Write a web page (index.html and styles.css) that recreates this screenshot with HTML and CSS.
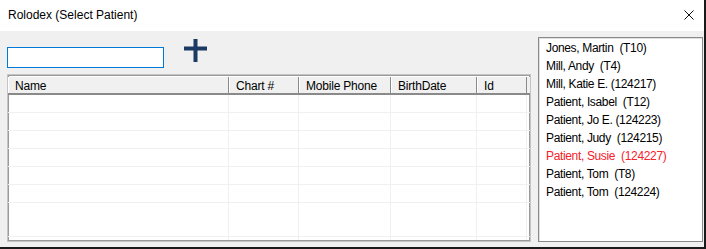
FILE: index.html
```html
<!DOCTYPE html>
<html lang="en">
<head>
  <meta charset="UTF-8">
  <title>Rolodex (Select Patient)</title>
  <link rel="stylesheet" href="styles.css">
</head>
<body>
  <div class="window">
    <!-- title bar -->
    <div class="titlebar">
      <span class="title">Rolodex (Select Patient)</span>
      <svg class="close" width="10" height="10" viewBox="0 0 10 10">
        <path d="M0.5 0.5 L9.5 9.5 M9.5 0.5 L0.5 9.5" stroke="#111" stroke-width="1" fill="none"/>
      </svg>
    </div>

    <div class="client">
      <div class="left">
        <!-- search + add -->
        <div class="search-row">
          <div class="search"></div>
          <svg class="add" width="23" height="23" viewBox="0 0 23 23">
            <rect x="9.5" y="0" width="4" height="23" fill="#1b3a63"/>
            <rect x="0" y="7.5" width="23" height="4" fill="#1b3a63"/>
          </svg>
        </div>

        <!-- patient grid -->
        <div class="grid">
          <div class="grid-head">
            <div class="hcell">Name</div>
            <div class="hcell">Chart #</div>
            <div class="hcell">Mobile Phone</div>
            <div class="hcell">BirthDate</div>
            <div class="hcell">Id</div>
          </div>
          <div class="grid-row"><div></div><div></div><div></div><div></div><div></div></div>
          <div class="grid-row"><div></div><div></div><div></div><div></div><div></div></div>
          <div class="grid-row"><div></div><div></div><div></div><div></div><div></div></div>
          <div class="grid-row"><div></div><div></div><div></div><div></div><div></div></div>
          <div class="grid-row"><div></div><div></div><div></div><div></div><div></div></div>
          <div class="grid-row"><div></div><div></div><div></div><div></div><div></div></div>
          <div class="grid-row tall"><div></div><div></div><div></div><div></div><div></div></div>
          <div class="grid-row filler"><div></div><div></div><div></div><div></div><div></div></div>
        </div>
      </div>

      <!-- rolodex list -->
      <ul class="patients">
        <li>Jones, Martin  (T10)</li>
        <li>Mill, Andy  (T4)</li>
        <li>Mill, Katie E. (124217)</li>
        <li>Patient, Isabel  (T12)</li>
        <li>Patient, Jo E. (124223)</li>
        <li>Patient, Judy  (124215)</li>
        <li class="flagged">Patient, Susie  (124227)</li>
        <li>Patient, Tom  (T8)</li>
        <li>Patient, Tom  (124224)</li>
      </ul>
    </div>
  </div>
</body>
</html>
```

FILE: styles.css
```css
/* page */
body {
  margin: 0;
  background: #fff;
  font-family: "Liberation Sans", Arial, sans-serif;
  font-size: 12px;
  color: #000;
}
.window {
  width: 706px;
  height: 249px;
  box-sizing: border-box;
  border-right: 2px solid #1a1a1a;
  border-bottom: 2px solid #1a1a1a;
  display: flex;
  flex-direction: column;
}
/* title bar */
.titlebar {
  height: 31px;
  background: #fff;
  display: flex;
  align-items: center;
  padding: 0 8px 2px 8px;
  box-sizing: border-box;
}
.title {
  flex: 1;
}
.close {
  margin-right: 2px;
  margin-top: 1px;
}
/* client area */
.client {
  flex: 1;
  background: #f0f0f0;
  display: flex;
  gap: 7px;
  padding: 6px 1px 5px 7px;
}
.left {
  width: 524px;
  display: flex;
  flex-direction: column;
}
.search-row {
  height: 37px;
  display: flex;
  align-items: flex-start;
}
/* focused text box */
.search {
  width: 157px;
  height: 21px;
  box-sizing: border-box;
  margin-top: 10px;
  border: 1px solid #0078d7;
  background: #fff;
}
.add {
  margin: 2px 0 0 20px;
}
/* grid */
.grid {
  flex: 1;
  background: #fff;
  border: 1px solid #c4c4c4;
  box-shadow: inset 1px 1px 0 #9a9a9a, inset -1px -1px 0 #9a9a9a;
  padding: 2px 0 1px 0;
  display: flex;
  flex-direction: column;
}
.grid-head,
.grid-row {
  display: grid;
  grid-template-columns: 221px 70px 92px 86px 50px;
}
.grid-head {
  height: 18px;
  background: #f0f0f0;
  border-bottom: 2px solid #8a8a8a;
  box-sizing: border-box;
}
.hcell {
  padding: 2px 6px 0;
  border-left: 1px solid #fff;
  border-right: 1px solid #8a8a8a;
  line-height: 14px;
  white-space: nowrap;
  letter-spacing: -0.2px;
}
.grid-row {
  height: 18px;
  box-sizing: border-box;
  border-bottom: 1px solid #f0f0f0;
}
.grid-row div {
  border-right: 1px solid #f0f0f0;
}
.grid-row.tall {
  height: 34px;
}
.grid-row.filler {
  flex: 1;
  border-bottom: none;
}
/* patient list */
.patients {
  width: 165px;
  box-sizing: border-box;
  margin: 0;
  padding: 1px 0 0 7px;
  list-style: none;
  background: #fff;
  border: 1px solid #8a8a8a;
  box-shadow: inset 1px 1px 0 #e0e0e0;
}
.patients li {
  height: 18px;
  line-height: 18px;
  white-space: pre;
  letter-spacing: -0.35px;
}
.patients .flagged {
  color: #f5212b;
}
```
